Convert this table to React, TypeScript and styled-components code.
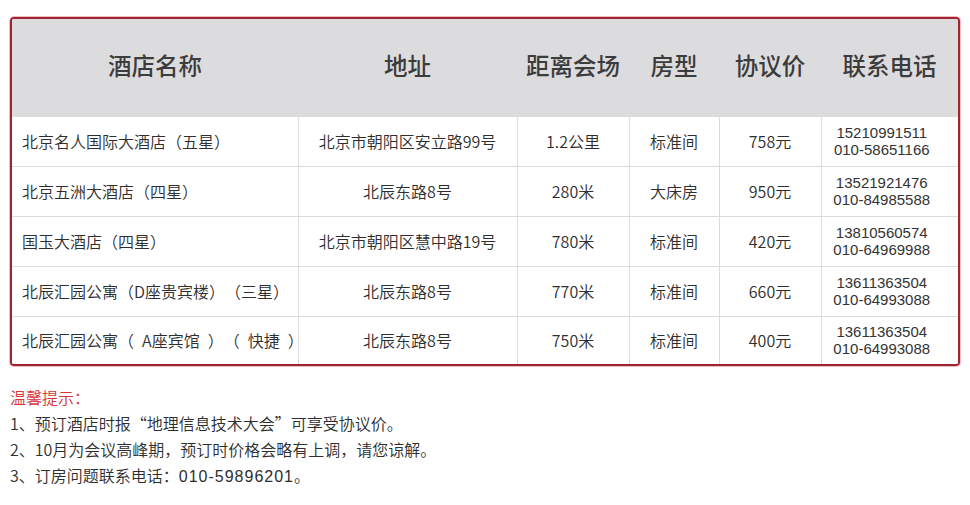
import React from 'react';
import styled, { createGlobalStyle } from 'styled-components';

const GlobalStyle = createGlobalStyle`
  html, body {
    margin: 0;
    padding: 0;
    background: #ffffff;
  }
  body {
    font-family: "Noto Sans CJK SC", "Noto Sans", "Liberation Sans", sans-serif;
    color: #333333;
    text-spacing-trim: space-all;
  }
`;

const Page = styled.div`
  width: 970px;
  height: 505px;
  padding: 17px 0 0 10px;
  box-sizing: border-box;
`;

const TableFrame = styled.div`
  width: 950px;
  box-sizing: border-box;
  border: 2px solid #9c2631;
  border-radius: 4px;
  box-shadow: 0 0 0 1px #f6b9c0;
  overflow: hidden;
`;

const Table = styled.table`
  width: 100%;
  border-collapse: collapse;
  table-layout: fixed;
`;

const HeadRow = styled.tr`
  height: 97px;
  background: #dcdbdd;
`;

const HeadCell = styled.th`
  font-size: 23.5px;
  font-weight: 500;
  color: #3c3c3c;
  text-align: center;
  padding: 0 0 4px 0;
`;

const Row = styled.tr<{ $h: number }>`
  height: ${(p) => p.$h}px;
  background: #ffffff;
`;

const Cell = styled.td<{ $left?: boolean }>`
  border-left: 1px solid #dcdcdc;
  border-top: 1px solid #dcdcdc;
  text-align: ${(p) => (p.$left ? 'left' : 'center')};
  padding: ${(p) => (p.$left ? '0 0 0 10px' : '0')};
  font-size: 16px;
  font-weight: 350;
  color: #2e2e2e;
  white-space: nowrap;
  &:first-child {
    border-left: none;
  }
`;

const Phone = styled.div`
  font-size: 15px;
  line-height: 17px;
  padding-right: 16px;
  color: #333333;
  font-family: "Liberation Sans", "Noto Sans", sans-serif;
`;

const Notes = styled.div`
  margin-top: 18px;
  display: flex;
  flex-direction: column;
`;

const NoteTitle = styled.div`
  font-size: 16px;
  line-height: 26px;
  font-weight: 350;
  color: #d8343a;
`;

const NoteLine = styled.div`
  font-size: 16px;
  line-height: 26px;
  font-weight: 350;
  color: #2e2e2e;
`;

const Num = styled.span`
  font-family: "Liberation Sans", "Noto Sans", sans-serif;
  letter-spacing: 1px;
`;

const columns = [
  { title: '酒店名称', width: 286 },
  { title: '地址', width: 219 },
  { title: '距离会场', width: 112 },
  { title: '房型', width: 90 },
  { title: '协议价', width: 102 },
  { title: '联系电话', width: 137 },
];

const hotels = [
  ['北京名人国际大酒店（五星）', '北京市朝阳区安立路99号', '1.2公里', '标准间', '758元', '15210991511', '010-58651166'],
  ['北京五洲大酒店（四星）', '北辰东路8号', '280米', '大床房', '950元', '13521921476', '010-84985588'],
  ['国玉大酒店（四星）', '北京市朝阳区慧中路19号', '780米', '标准间', '420元', '13810560574', '010-64969988'],
  ['北辰汇园公寓（D座贵宾楼）（三星）', '北辰东路8号', '770米', '标准间', '660元', '13611363504', '010-64993088'],
  ['北辰汇园公寓（\u2002A座宾馆\u2002）（\u2002快捷\u2002）', '北辰东路8号', '750米', '标准间', '400元', '13611363504', '010-64993088'],
];

export default function App() {
  return (
    <Page>
      <GlobalStyle />
      <TableFrame>
        <Table>
          <colgroup>
            {columns.map((c) => (
              <col key={c.title} style={{ width: c.width }} />
            ))}
          </colgroup>
          <thead>
            <HeadRow>
              {columns.map((c) => (
                <HeadCell key={c.title}>{c.title}</HeadCell>
              ))}
            </HeadRow>
          </thead>
          <tbody>
            {hotels.map((h, i) => (
              <Row key={i} $h={i === hotels.length - 1 ? 48 : 50}>
                <Cell $left>{h[0]}</Cell>
                <Cell>{h[1]}</Cell>
                <Cell>{h[2]}</Cell>
                <Cell>{h[3]}</Cell>
                <Cell>{h[4]}</Cell>
                <Cell>
                  <Phone>{h[5]}</Phone>
                  <Phone>{h[6]}</Phone>
                </Cell>
              </Row>
            ))}
          </tbody>
        </Table>
      </TableFrame>
      <Notes>
        <NoteTitle>温馨提示：</NoteTitle>
        <NoteLine>1、预订酒店时报“地理信息技术大会”可享受协议价。</NoteLine>
        <NoteLine>2、10月为会议高峰期，预订时价格会略有上调，请您谅解。</NoteLine>
        <NoteLine>
          3、订房问题联系电话：<Num>010-59896201</Num>。
        </NoteLine>
      </Notes>
    </Page>
  );
}
